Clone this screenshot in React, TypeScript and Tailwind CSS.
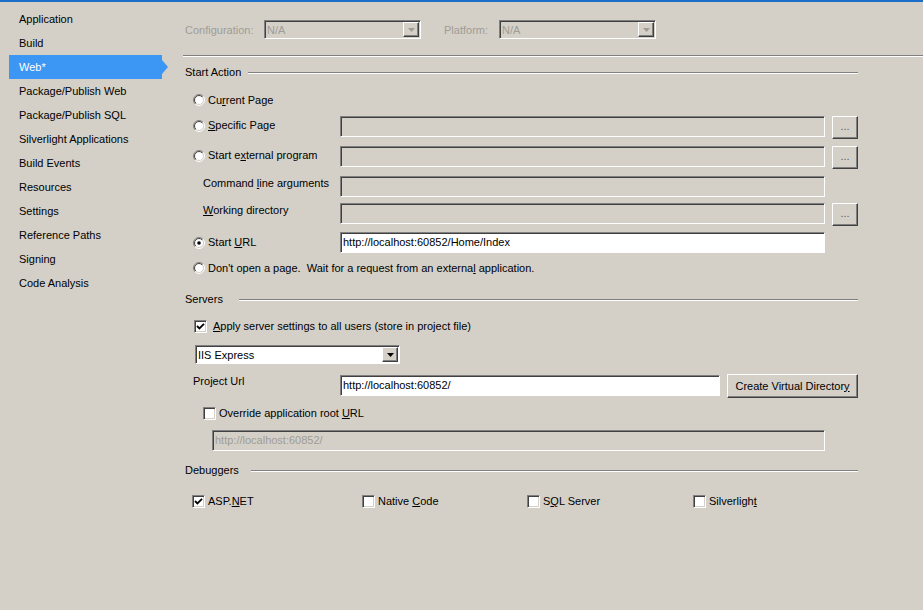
import React from "react";

const navItems = [
  "Application",
  "Build",
  "Web*",
  "Package/Publish Web",
  "Package/Publish SQL",
  "Silverlight Applications",
  "Build Events",
  "Resources",
  "Settings",
  "Reference Paths",
  "Signing",
  "Code Analysis",
];

function Radio({ checked = false }: { checked?: boolean }) {
  return (
    <svg width="12" height="12" viewBox="0 0 12 12" className="shrink-0">
      <defs>
        <linearGradient id="rOuter" x1="0" y1="0" x2="1" y2="1">
          <stop offset="0.5" stopColor="#808080" />
          <stop offset="0.5" stopColor="#ffffff" />
        </linearGradient>
        <linearGradient id="rInner" x1="0" y1="0" x2="1" y2="1">
          <stop offset="0.5" stopColor="#404040" />
          <stop offset="0.5" stopColor="#d4d0c8" />
        </linearGradient>
      </defs>
      <circle cx="6" cy="6" r="5.5" fill="none" stroke="url(#rOuter)" strokeWidth="1" />
      <circle cx="6" cy="6" r="4.5" fill="#ffffff" stroke="url(#rInner)" strokeWidth="1" />
      {checked && <circle cx="6" cy="6" r="1.8" fill="#000000" />}
    </svg>
  );
}

function Check({ checked = false }: { checked?: boolean }) {
  return (
    <div className="w-[13px] h-[13px] shrink-0 bg-white border border-t-[#808080] border-l-[#808080] border-b-white border-r-white shadow-[inset_1px_1px_0_#404040,inset_-1px_-1px_0_#d4d0c8] flex items-center justify-center">
      {checked && (
        <svg width="9" height="9" viewBox="0 0 9 9">
          <path d="M1 4 L3.4 6.4 L8 1.8" fill="none" stroke="#000" strokeWidth="1.8" />
        </svg>
      )}
    </div>
  );
}

function Arrow({ color }: { color: string }) {
  return (
    <svg width="7" height="4" viewBox="0 0 7 4">
      <path d="M0 0 H7 L3.5 4 Z" fill={color} />
    </svg>
  );
}

function Combo({
  className,
  text,
  disabled = false,
}: {
  className: string;
  text: string;
  disabled?: boolean;
}) {
  return (
    <div
      className={`h-[19px] flex items-stretch border border-t-[#808080] border-l-[#808080] border-b-white border-r-white shadow-[inset_1px_1px_0_#404040] ${className}`}
    >
      <div className={`flex-1 flex items-center pl-[2px] pt-[1px] ${disabled ? "text-[#a09c94]" : "text-black"}`}>{text}</div>
      <div className="w-[16px] mt-[1px] mb-[1px] mr-[1px] bg-[#d4d0c8] flex items-center justify-center border border-t-white border-l-white border-b-[#404040] border-r-[#404040] shadow-[inset_-1px_-1px_0_#808080]">
        <Arrow color={disabled ? "#a09c94" : "#000000"} />
      </div>
    </div>
  );
}

function TextBox({
  className,
  children,
}: {
  className: string;
  children?: React.ReactNode;
}) {
  return (
    <div
      className={`h-[21px] shrink-0 flex items-center pl-[2px] border border-t-[#808080] border-l-[#808080] border-b-white border-r-white shadow-[inset_1px_1px_0_#404040] ${className}`}
    >
      {children}
    </div>
  );
}

function Ellipsis() {
  return (
    <div className="ml-[7px] w-[26px] h-[23px] shrink-0 flex items-center justify-center pb-[2px] text-[#606060] border border-t-white border-l-white border-b-[#404040] border-r-[#404040] shadow-[inset_-1px_-1px_0_#808080]">
      ...
    </div>
  );
}

function Header({ title, lineGap }: { title: string; lineGap: string }) {
  return (
    <div className="h-[13px] flex items-center">
      <span>{title}</span>
      <div className={`flex-1 h-[2px] border-t border-t-[#808080] border-b border-b-white ${lineGap}`} />
    </div>
  );
}

export default function App() {
  return (
    <div className="w-[923px] h-[610px] bg-[#d4d0c8] border-t-2 border-[#1b6fc8] flex text-[11px] leading-[13px] text-black font-['Liberation_Sans',Arial,sans-serif] overflow-hidden">
      <nav className="w-[170px] shrink-0 pt-[5px] flex flex-col">
        {navItems.map((t) =>
          t === "Web*" ? (
            <div key={t} className="h-[24px] flex items-center">
              <div className="ml-[9px] w-[153px] h-[24px] bg-[#3c96f4] text-white pl-[10px] flex items-center">
                {t}
              </div>
              <div className="w-0 h-0 border-y-[7px] border-y-transparent border-l-[6px] border-l-[#3c96f4]" />
            </div>
          ) : (
            <div key={t} className="h-[24px] flex items-center pl-[19px]">
              {t}
            </div>
          )
        )}
      </nav>

      <main className="flex-1 pt-[18px] pl-[15px] pr-[65px] flex flex-col">
        {/* Configuration row */}
        <div className="h-[19px] flex items-center">
          <span className="w-[79px] pt-[1px] text-[#a09c94]">Configuration:</span>
          <Combo className="w-[157px]" text="N/A" disabled />
          <span className="ml-[23px] w-[55px] pt-[1px] text-[#a09c94]">Platform:</span>
          <Combo className="w-[157px]" text="N/A" disabled />
        </div>

        <div className="mt-[16px] -ml-[2px] -mr-[65px] h-[2px] border-t border-t-[#808080] border-b border-b-white" />

        {/* Start Action */}
        <div className="mt-[9px]">
          <Header title="Start Action" lineGap="ml-[7px]" />
        </div>

        <div className="mt-[12px] h-[18px] flex items-center pl-[8px] gap-[3px]">
          <Radio />
          <span>
            Cu<u>r</u>rent Page
          </span>
        </div>

        <div className="mt-[7px] h-[23px] flex items-start">
          <div className="w-[155px] shrink-0 pl-[8px] pt-[3px] flex items-center gap-[3px]">
            <Radio />
            <span>
              <u>S</u>pecific Page
            </span>
          </div>
          <TextBox className="w-[485px]" />
          <Ellipsis />
        </div>

        <div className="mt-[7px] h-[23px] flex items-start">
          <div className="w-[155px] shrink-0 pl-[8px] pt-[3px] flex items-center gap-[3px]">
            <Radio />
            <span>
              Start e<u>x</u>ternal program
            </span>
          </div>
          <TextBox className="w-[485px]" />
          <Ellipsis />
        </div>

        <div className="mt-[7px] h-[21px] flex items-start">
          <div className="w-[155px] shrink-0 pl-[18px] pt-[1px]">
            Command <u>l</u>ine arguments
          </div>
          <TextBox className="w-[485px]" />
        </div>

        <div className="mt-[6px] h-[23px] flex items-start">
          <div className="w-[155px] shrink-0 pl-[18px] pt-[1px]">
            <u>W</u>orking directory
          </div>
          <TextBox className="w-[485px]" />
          <Ellipsis />
        </div>

        <div className="mt-[6px] h-[21px] flex items-start">
          <div className="w-[155px] shrink-0 pl-[8px] pt-[4px] flex items-center gap-[3px]">
            <Radio checked />
            <span>
              Start <u>U</u>RL
            </span>
          </div>
          <TextBox className="w-[485px] bg-white">http://localhost:60852/Home/Index</TextBox>
        </div>

        <div className="mt-[6px] h-[18px] flex items-center pl-[8px] gap-[3px]">
          <Radio />
          <span className="whitespace-pre">
            Don't open a page.  Wait for a request from an externa<u>l</u> application.
          </span>
        </div>

        {/* Servers */}
        <div className="mt-[16px]">
          <Header title="Servers" lineGap="ml-[16px]" />
        </div>

        <div className="mt-[14px] h-[13px] flex items-center pl-[9px]">
          <Check checked />
          <span className="ml-[6px]">
            <u>A</u>pply server settings to all users (store in project file)
          </span>
        </div>

        <div className="mt-[12px] pl-[10px]">
          <Combo className="w-[205px] bg-white" text="IIS Express" />
        </div>

        <div className="mt-[10px] h-[24px] flex items-start">
          <div className="w-[155px] shrink-0 pl-[8px] pt-[1px]">
            Pro<u>j</u>ect Url
          </div>
          <TextBox className="mt-[1px] w-[380px] bg-white">http://localhost:60852/</TextBox>
          <div className="ml-[7px] w-[131px] h-[24px] shrink-0 flex items-center justify-center border border-t-white border-l-white border-b-[#404040] border-r-[#404040] shadow-[inset_-1px_-1px_0_#808080]">
            <span>
              Create Virtual Director<u>y</u>
            </span>
          </div>
        </div>

        <div className="mt-[9px] h-[13px] flex items-center pl-[18px]">
          <Check />
          <span className="ml-[3px]">
            Override application root <u>U</u>RL
          </span>
        </div>

        <div className="mt-[10px] pl-[27px]">
          <TextBox className="w-[613px] text-[#a09c94]">http://localhost:60852/</TextBox>
        </div>

        {/* Debuggers */}
        <div className="mt-[13px]">
          <Header title="Debuggers" lineGap="ml-[12px]" />
        </div>

        <div className="mt-[18px] h-[13px] flex items-center pl-[7px]">
          <div className="w-[170px] flex items-center">
            <Check checked />
            <span className="ml-[3px]">
              ASP.<u>N</u>ET
            </span>
          </div>
          <div className="w-[165px] flex items-center">
            <Check />
            <span className="ml-[3px]">
              Native <u>C</u>ode
            </span>
          </div>
          <div className="w-[166px] flex items-center">
            <Check />
            <span className="ml-[3px]">
              S<u>Q</u>L Server
            </span>
          </div>
          <div className="flex items-center">
            <Check />
            <span className="ml-[3px]">
              Silverligh<u>t</u>
            </span>
          </div>
        </div>
      </main>
    </div>
  );
}
